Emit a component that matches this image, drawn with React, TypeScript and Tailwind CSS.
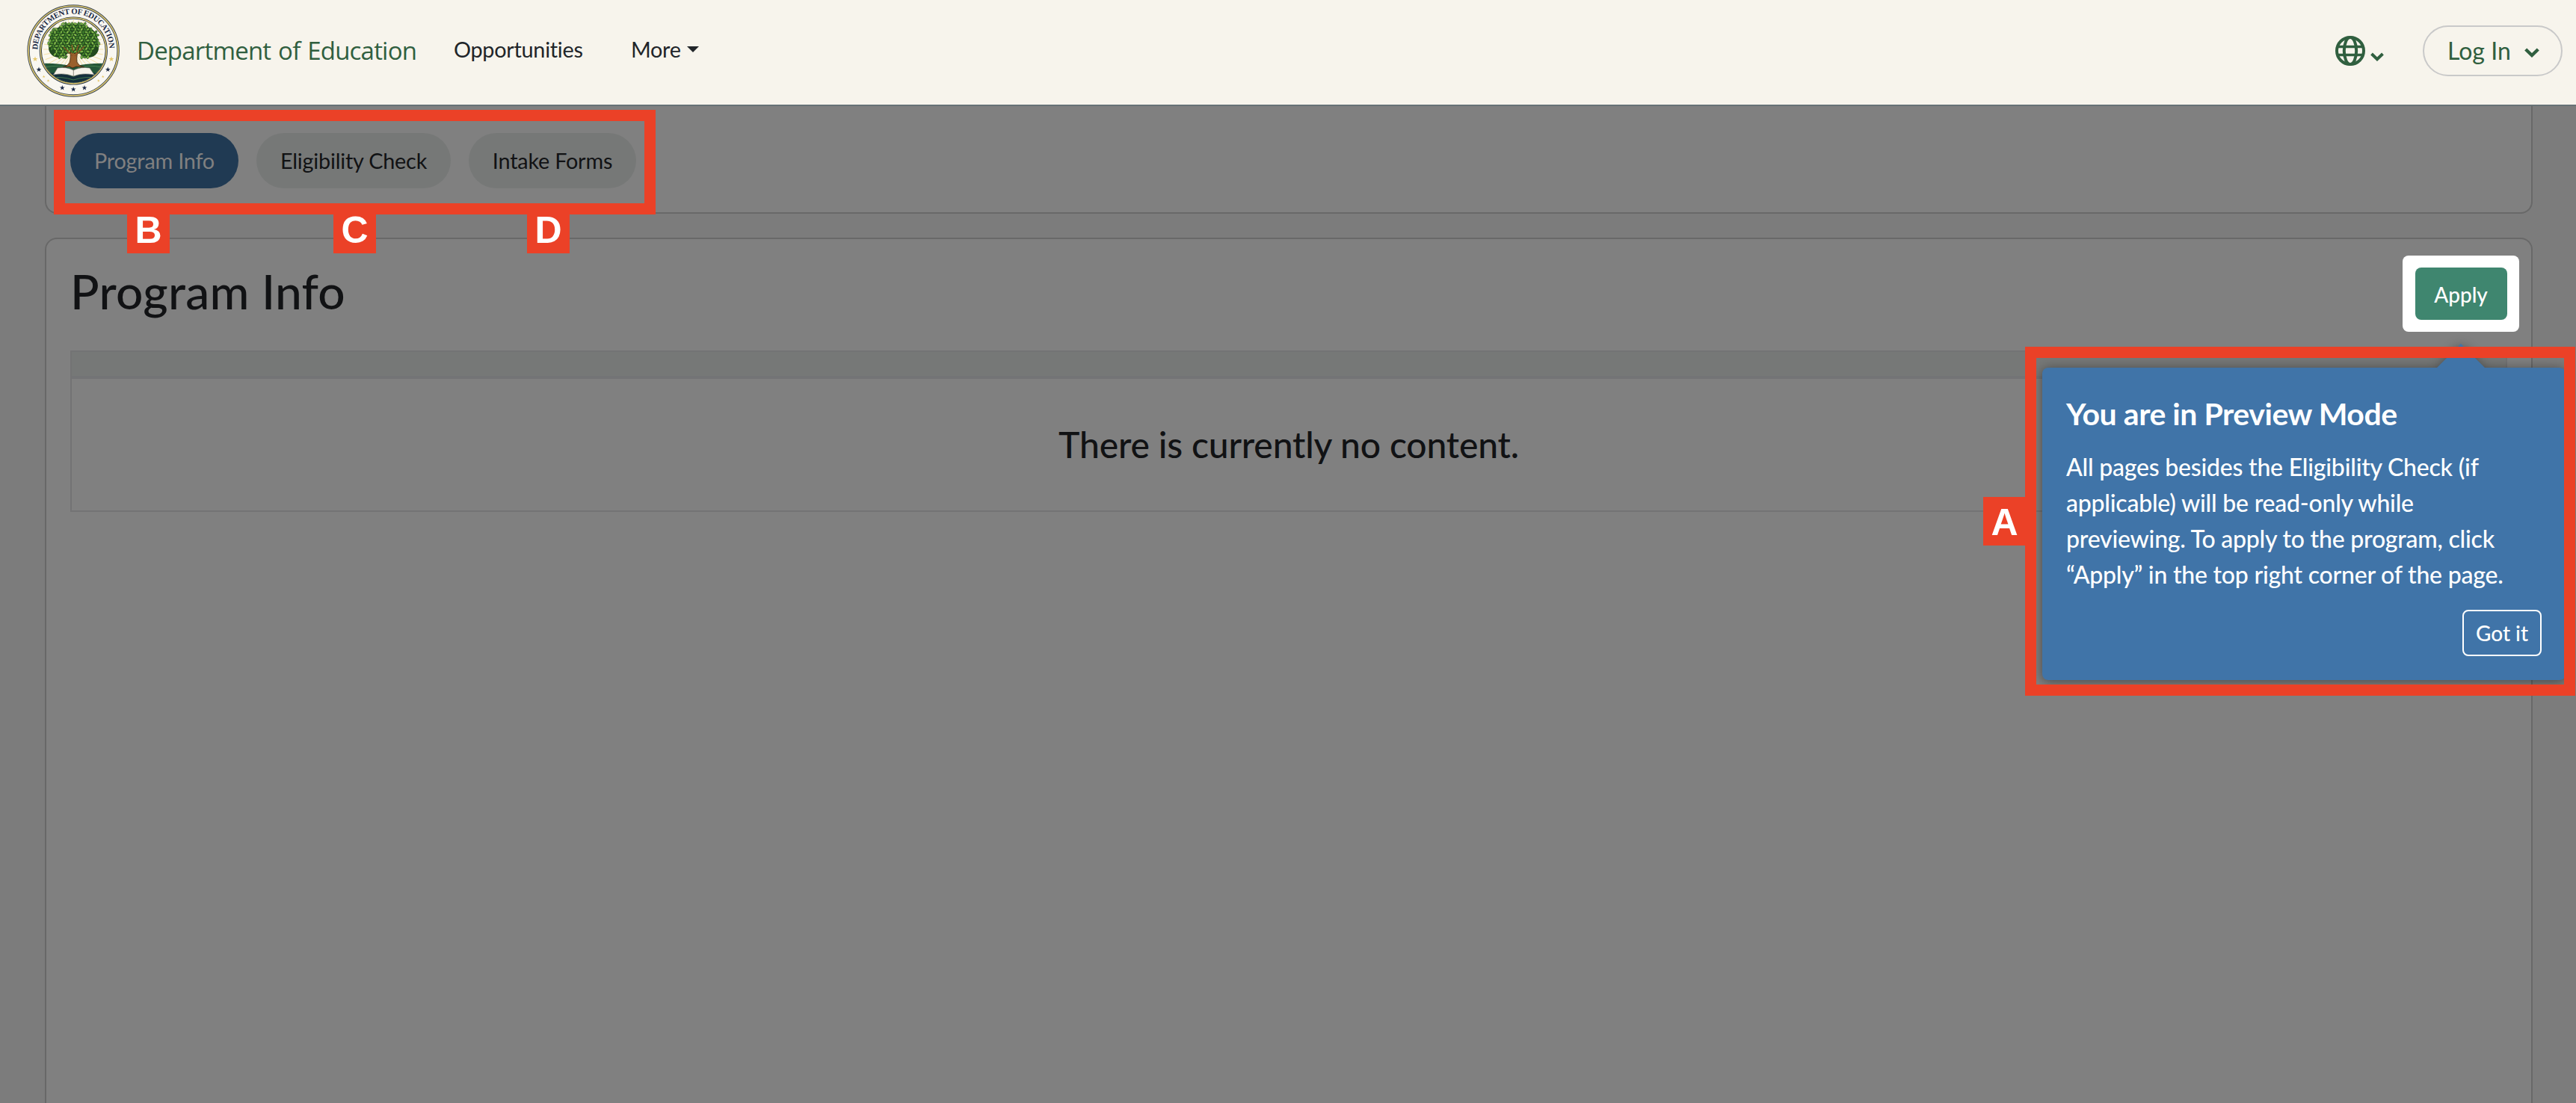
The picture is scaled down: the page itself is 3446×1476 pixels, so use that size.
import React from "react";

const tabs = [
  { label: "Program Info", active: true, width: "w-[225px]" },
  { label: "Eligibility Check", active: false, width: "w-[260px]" },
  { label: "Intake Forms", active: false, width: "w-[224px]" },
];

const leafColors = ["#5a9a35", "#76b243", "#42822d", "#88c04c"];

// Leaves sit on staggered rows inside the crown's lumpy outline
const leaves: { x: number; y: number; r: number; c: string }[] = [];
for (let row = 0; row < 14; row++) {
  for (let col = 0; col < 18; col++) {
    const x = 27 + col * 4.2 + (row % 2) * 2.1;
    const y = 26 + row * 3.7;
    const dx = (x - 62.5) / 34;
    const dy = (y - 49) / 25;
    const edge = 1 + 0.1 * Math.sin(Math.atan2(dy, dx) * 9);
    const gap = y > 64 && Math.abs(x - 62.5) < 10;
    if (dx * dx + dy * dy < edge && !gap) {
      leaves.push({ x, y, r: ((row * 7 + col * 5) % 9) * 20 - 80, c: leafColors[(row * 3 + col * 7) % 4] });
    }
  }
}

const star = "M0-3.6 0.9-1.1 3.4-1.1 1.4 0.5 2.1 3 0 1.5-2.1 3-1.4 0.5-3.4-1.1-0.9-1.1Z";

function Seal() {
  return (
    <svg viewBox="0 0 124 124" className="w-[124px] h-[124px] shrink-0">
      <defs>
        <path id="sealArc" d="M14.3 60.5A48 48 0 0 1 110.3 60.5" />
        <clipPath id="sealClip"><circle cx="62.3" cy="62" r="42.5" /></clipPath>
      </defs>
      <circle cx="62.1" cy="62" r="60" fill="#f9f7f1" stroke="#3a4757" strokeWidth="3.4" />
      <circle cx="62.1" cy="62" r="60" fill="none" stroke="#dcc56c" strokeWidth="1.6" />
      <circle cx="62.3" cy="62" r="44" fill="#fbf8ee" stroke="#26354a" strokeWidth="3.2" />
      <circle cx="62.3" cy="62" r="44" fill="none" stroke="#dcc56c" strokeWidth="1.4" />
      <text fontFamily="'Liberation Serif', serif" fontWeight="700" fontSize="10.6" fill="#1c2b47">
        <textPath href="#sealArc" textLength="149" lengthAdjust="spacing">DEPARTMENT OF EDUCATION</textPath>
      </text>

      <g clipPath="url(#sealClip)">
        {Array.from({ length: 36 }, (_, i) => (
          <line key={i} x1="62.3" y1="60" x2="62.3" y2="20" stroke="#f1dc9c" strokeWidth="0.8" transform={`rotate(${i * 10} 62.3 60)`} />
        ))}
        <path d="M18 79Q40 78 62 83Q84 78 107 79V106H18Z" fill="#245638" />
        <path d="M18 94Q40 88 62 97Q84 88 107 94V108H18Z" fill="#142f3c" />
        <path d="M24 84Q44 80 58 85M100 84Q82 80 68 85M30 98Q48 96 62 101Q78 96 94 98" fill="none" stroke="#4f8b56" strokeWidth="0.8" />
      </g>
      <ellipse cx="62.5" cy="46" rx="32" ry="20" fill="#234a1e" />
      <ellipse cx="43" cy="58" rx="14" ry="13" fill="#234a1e" />
      <ellipse cx="82" cy="58" rx="14" ry="13" fill="#234a1e" />
      <path d="M58 58Q59 72 57 78Q54 83 48 84L57 83 61 85 66 83 77 84Q69 82 67 77Q66 70 69 58L64 66 61 60Z" fill="#9a602c" stroke="#38230f" strokeWidth="0.8" />
      {leaves.map((l, i) => (
        <ellipse key={i} cx={l.x} cy={l.y} rx="1.4" ry="2.5" fill={l.c} stroke="#1f421b" strokeWidth="0.5" transform={`rotate(${l.r} ${l.x} ${l.y})`} />
      ))}
      <path d="M61 69 49 57M64 69 77 56M62 62 60 54M66 62 69 54" fill="none" stroke="#8a5426" strokeWidth="1.4" />
      <path d="M41 85Q53 83 62.3 88Q72 83 84 85L90 94Q74 91 62.3 96Q50 91 35.5 94Z" fill="#f6f3ea" stroke="#77746c" strokeWidth="0.6" />
      <path d="M62.3 88V96" stroke="#77746c" strokeWidth="0.8" />

      <g fill="#e5c76b">
        <path d={star} transform="translate(11 73)" />
        <path d={star} transform="translate(113 73)" />
        <path d={star} transform="translate(22.6 96.5) scale(.55)" />
        <path d={star} transform="translate(28.5 102) scale(.55)" />
        <path d={star} transform="translate(101.7 96.5) scale(.55)" />
        <path d={star} transform="translate(95.8 102) scale(.55)" />
      </g>
      <g fill="#1c2b47">
        <path d={star} transform="translate(16 87)" />
        <path d={star} transform="translate(108.3 87)" />
        <path d={star} transform="translate(47.3 111.5)" />
        <path d={star} transform="translate(62.2 113.5)" />
        <path d={star} transform="translate(77 111.5)" />
      </g>
    </svg>
  );
}

function Globe() {
  return (
    <svg viewBox="0 0 40 40" className="w-10 h-10" fill="none" stroke="#305f3f" strokeWidth="4">
      <circle cx="20" cy="20" r="18" />
      <ellipse cx="20" cy="20" rx="8.2" ry="18" />
      <path d="M3 14.5H37M3 25.5H37" strokeWidth="3.4" />
    </svg>
  );
}

function Chevron({ className }: { className: string }) {
  return (
    <svg viewBox="0 0 20 13" className={className} fill="none" stroke="#305f3f" strokeWidth="4.4">
      <path d="M1.7 2 10 10 18.3 2" />
    </svg>
  );
}

function Marker({ letter, className }: { letter: string; className: string }) {
  return (
    <div className={`absolute flex items-center justify-center w-[57px] h-[65px] pt-[2px] bg-[#eb4127] text-white text-[50px] leading-none font-bold font-['Liberation_Sans',sans-serif] ${className}`}>
      {letter}
    </div>
  );
}

export default function App() {
  return (
    <div className="relative flex flex-col w-[3446px] h-[1476px] overflow-hidden bg-[#7c7c7c] text-[#111214] font-[Lato,sans-serif]">

      {/* Navbar */}
      <header className="flex items-center h-[142px] shrink-0 pl-9 pr-[18px] pb-[4px] bg-[#f7f4ec] border-b-2 border-[#677276]">
        <Seal />
        <span className="ml-[23px] w-[376px] pb-[2px] whitespace-nowrap text-[33px] leading-none tracking-[-0.8px] [word-spacing:2px] text-[#305f3f] font-medium font-['Trebuchet_MS','Open_Sans',sans-serif]">
          Department of Education
        </span>
        <nav className="flex items-center ml-12 pb-1 gap-[63px] text-[28.8px] leading-none tracking-[-0.27px] text-[#212529]">
          <a className="w-[174px] whitespace-nowrap">Opportunities</a>
          <a className="flex items-center">
            More
            <span className="ml-2 border-x-[8px] border-x-transparent border-t-[8px] border-t-[#212529]" />
          </a>
        </nav>
        <div className="flex items-center ml-auto">
          <Globe />
          <Chevron className="w-[18px] h-3 ml-[7px] mt-[15px]" />
          <button className="flex items-center justify-between w-[187px] h-[68px] ml-[52px] pl-[31px] pr-[29px] rounded-full border-2 border-[#c9c9c9] text-[32px] leading-none text-[#305f3f]">
            Log In
            <Chevron className="w-5 h-[13px] mt-1" />
          </button>
        </div>
      </header>

      <main className="flex flex-col flex-1 gap-8 pl-[60px] pr-[58px]">
        {/* Tabs */}
        <section className="flex gap-6 h-36 shrink-0 px-8 pt-9 bg-[#808080] border-2 border-t-0 border-[#686868] rounded-b-2xl">
          {tabs.map((tab) => (
            <button
              key={tab.label}
              className={`${tab.width} h-[74px] rounded-[37px] whitespace-nowrap text-[28.8px] leading-none tracking-[-0.2px] ${
                tab.active ? "bg-[#203a53] text-[#808080]" : "bg-[#767877]"
              }`}
            >
              {tab.label}
            </button>
          ))}
        </section>

        {/* Page content */}
        <section className="flex flex-col flex-1 px-8 bg-[#808080] border-2 border-b-0 border-[#686868] rounded-t-2xl">
          <div className="flex justify-between h-[149px] pt-[22px]">
            <h1 className="pt-[9px] text-[64px] leading-[77px] font-medium tracking-[0.25px]">Program Info</h1>
            <div className="flex items-center justify-center w-[156px] h-[102px] -mr-4 bg-white rounded-lg">
              <button className="w-[123px] h-[70px] pt-[2px] rounded-lg bg-[#3f866f] text-white text-[28px] font-medium leading-none">
                Apply
              </button>
            </div>
          </div>
          <div className="h-[216px] border-2 border-[#737374]">
            <div className="h-9 bg-[#767877] border-b-4 border-[#737476]" />
            <div className="flex items-center justify-center h-44 text-[48px] leading-none font-medium tracking-[-0.15px]">
              There is currently no content.
            </div>
          </div>
        </section>
      </main>

      {/* Preview mode popover */}
      <div className="absolute left-[2732px] top-[492px] flex flex-col w-[700px] h-[418px] px-8 pt-[34px] pb-8 rounded-lg bg-[#4074a8] text-white drop-shadow-[0_2px_8px_rgba(0,0,0,0.45)]">
        <span className="absolute -top-8 left-[528px] border-x-[32px] border-x-transparent border-b-[32px] border-b-[#4074a8]" />
        <h2 className="text-[41px] leading-[56px] font-bold tracking-[-0.45px]">You are in Preview Mode</h2>
        <p className="mt-[19px] text-[32px] leading-[48px] font-medium tracking-[-0.22px] whitespace-nowrap">
          All pages besides the Eligibility Check (if<br />
          applicable) will be read-only while<br />
          previewing. To apply to the program, click<br />
          “Apply” in the top right corner of the page.
        </p>
        <button className="self-end mt-auto w-[106px] h-[62px] rounded-lg border-2 border-white text-[28px] font-medium leading-none">
          Got it
        </button>
      </div>

      {/* Callout frames and markers */}
      <div className="absolute left-[72px] top-[147px] w-[805px] h-[140px] border-[15px] border-[#eb4127]" />
      <Marker letter="B" className="left-[170px] top-[274px]" />
      <Marker letter="C" className="left-[446px] top-[274px]" />
      <Marker letter="D" className="left-[705px] top-[274px]" />
      <div className="absolute left-[2709px] top-[464px] w-[736px] h-[467px] border-[15px] border-[#eb4127]" />
      <Marker letter="A" className="left-[2653px] top-[665px]" />
    </div>
  );
}
